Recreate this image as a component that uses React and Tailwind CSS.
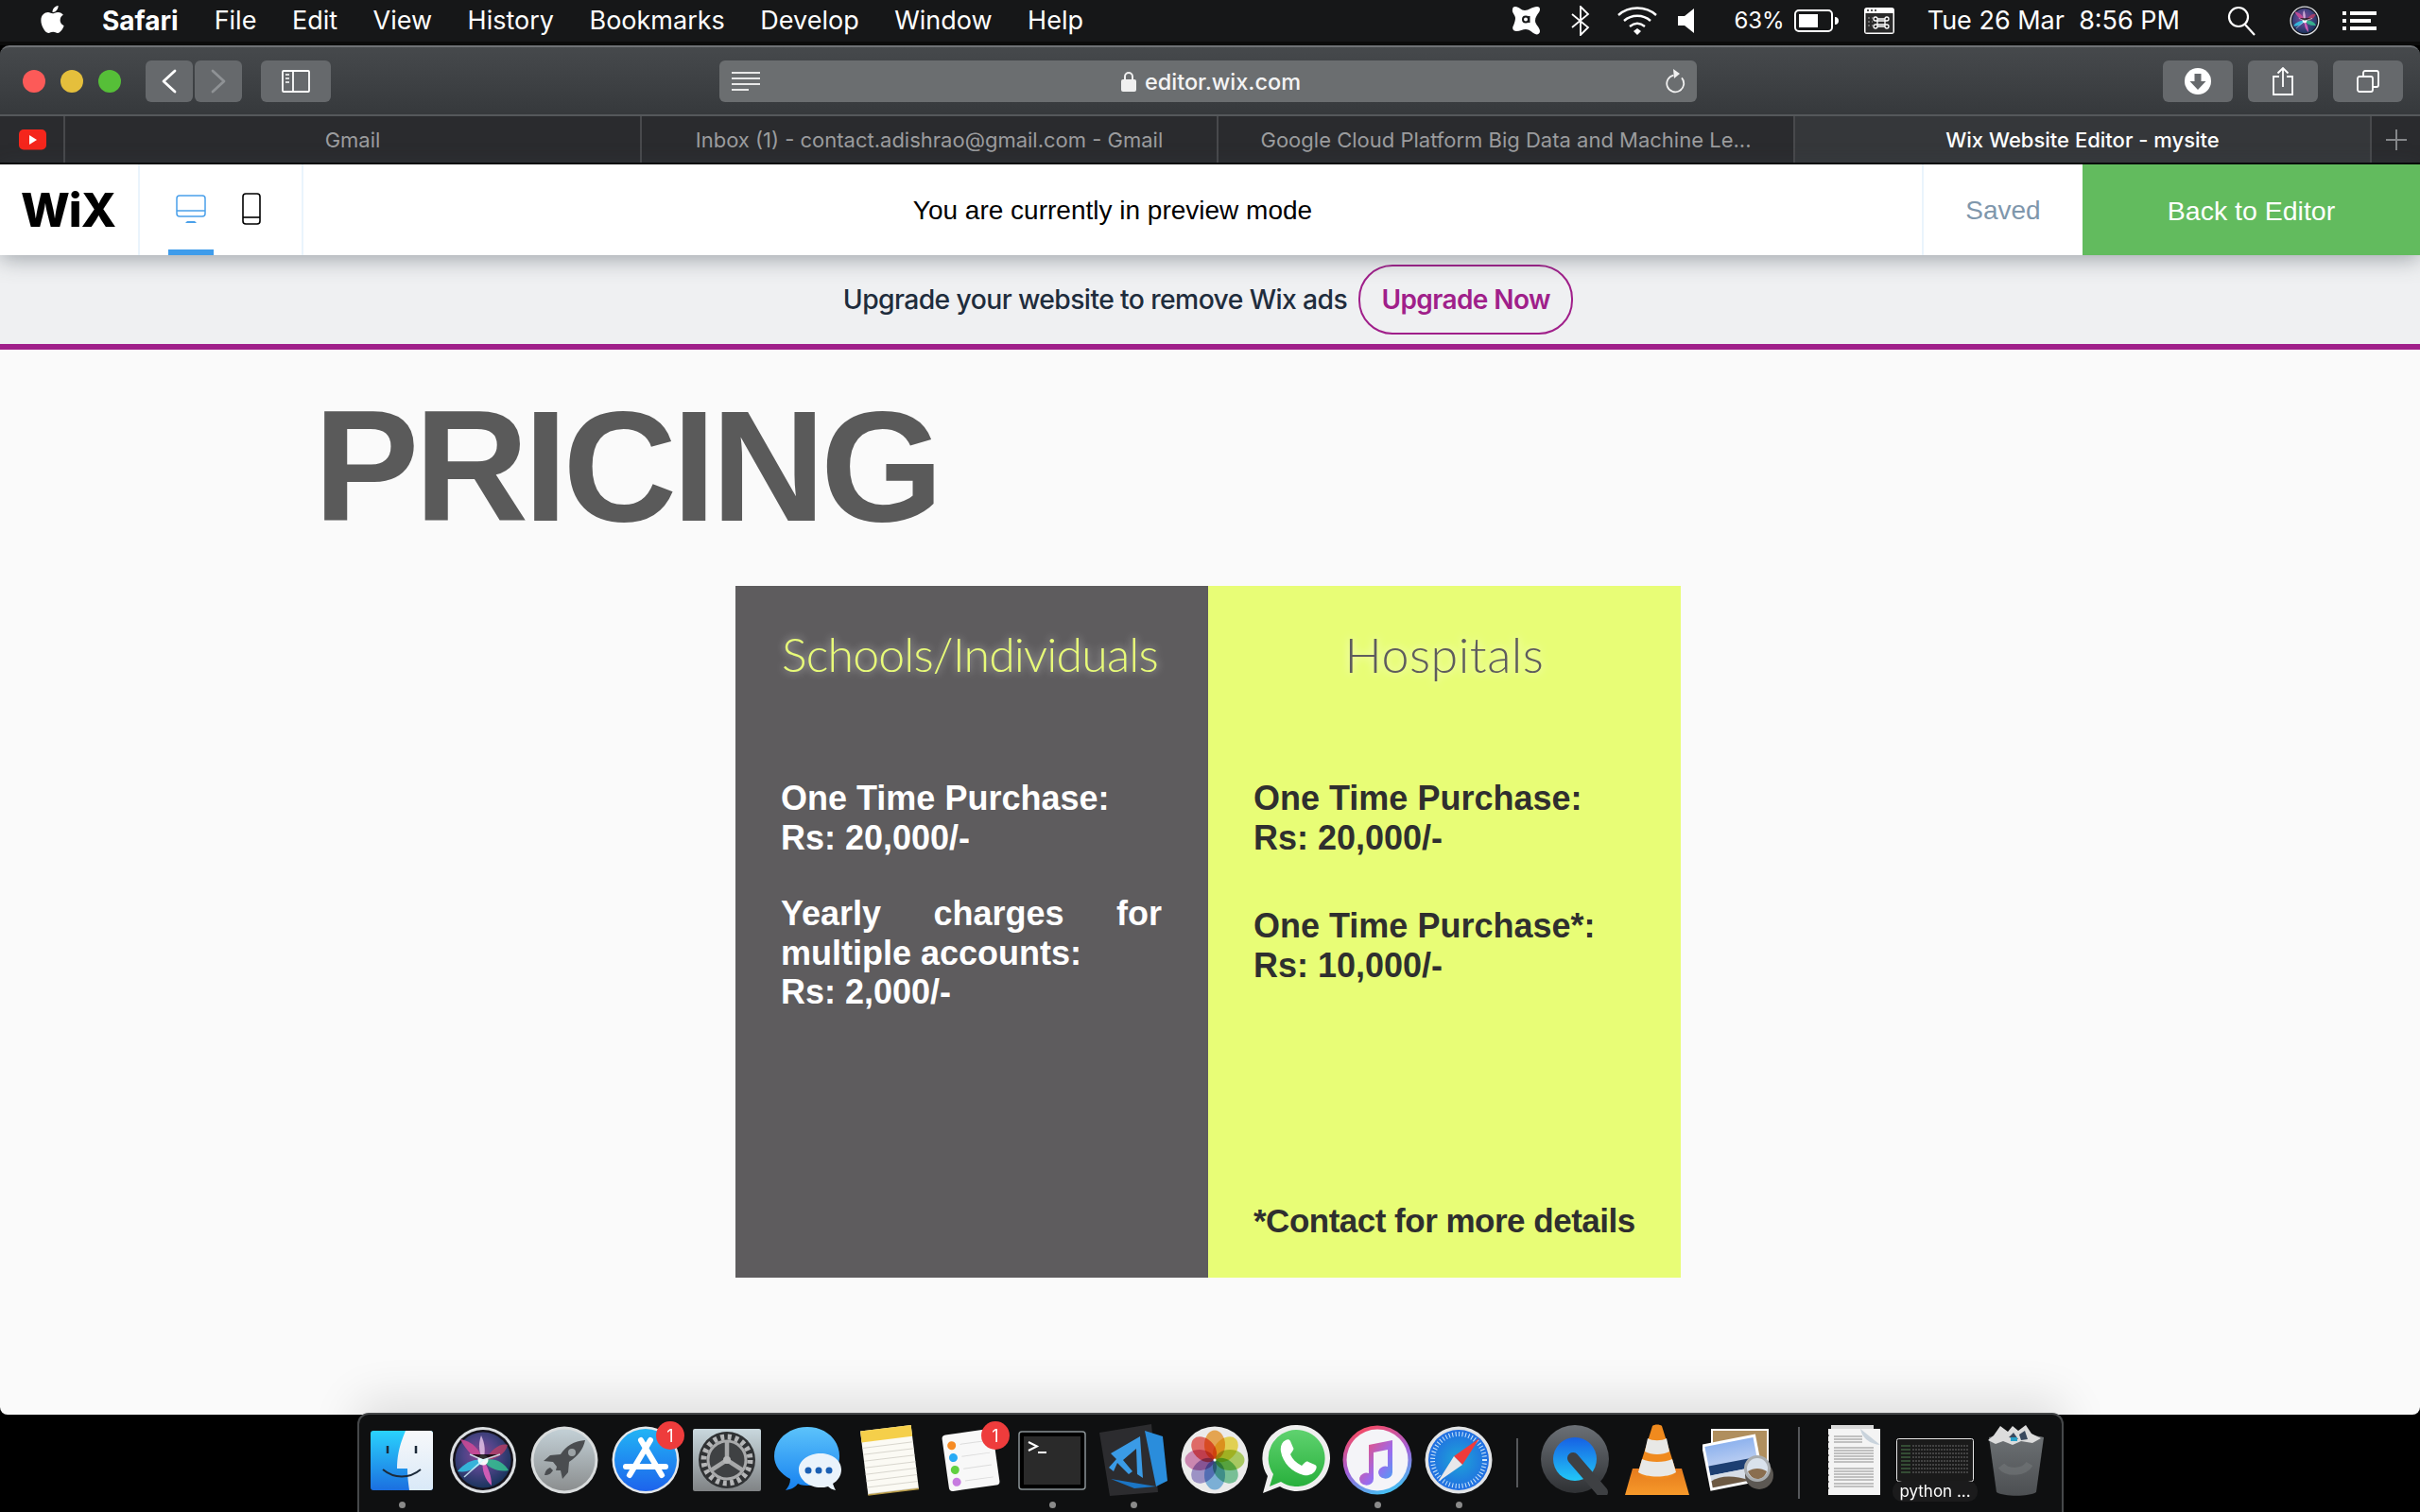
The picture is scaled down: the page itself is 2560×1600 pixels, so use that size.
import React from "react";
import { FaApple } from "react-icons/fa";

const ui = "font-['Inter','Liberation_Sans',sans-serif]";
const helv = "font-['Liberation_Sans',Arial,sans-serif]";

// top bar icons
const Avast = () => (
    <svg width="32" height="32" viewBox="0 0 32 32">
        <path fill="#fff" d="M4 1c4 0 6 4 10 4s8-4 13-4c3 0 4 3 2 6-2 3-4 5-4 9s5 7 5 11c0 3-3 4-5 3-4-2-6-5-10-5-3 0-6 2-10 2-3 0-5-3-3-6 1-3 2-5 2-8S0 7 1 4c0-2 1-3 3-3z" />
        <circle cx="15" cy="14.500" r="3" fill="none" stroke="#161718" strokeWidth="2" />
        <path d="M18.500 11v7" stroke="#161718" strokeWidth="2" />
    </svg>
);

const Bluetooth = () => (
    <svg width="20" height="32" viewBox="0 0 20 32" fill="none" stroke="#fff" strokeWidth="1.800">
        <path d="M1 9l17 14-8 8V1l8 8L1 23" />
    </svg>
);

const Wifi = () => (
    <svg width="42" height="30" viewBox="0 0 42 30" fill="none" stroke="#fff" strokeWidth="2.400">
        <path d="M1 9c11-10 29-10 40 0" />
        <path d="M7 15c8-7 20-7 28 0" />
        <path d="M13 21c5-4 11-4 16 0" />
        <path d="M17 26l4-3 4 3-4 4z" fill="#fff" stroke="none" />
    </svg>
);

const Speaker = () => (
    <svg width="18" height="26" viewBox="0 0 18 26">
        <path fill="#fff" d="M0 8h7l10-8v26L7 18H0z" />
    </svg>
);

const Battery = () => (
    <svg width="48" height="24" viewBox="0 0 48 24">
        <rect x="1" y="1" width="39" height="22" rx="4" fill="none" stroke="#fff" strokeWidth="2" />
        <rect x="5" y="5" width="20" height="14" fill="#fff" />
        <path d="M43 8c3 0 4 2 4 4s-1 4-4 4z" fill="#fff" />
    </svg>
);

const CmdIcon = () => (
    <svg width="32" height="28" viewBox="0 0 32 28">
        <rect width="32" height="28" rx="3" fill="#fff" />
        <rect x="1.500" y="6" width="29" height="20.500" fill="#2a2a2a" />
        <circle cx="4" cy="3" r="1" fill="#222" />
        <circle cx="8" cy="3" r="1" fill="#222" />
        <circle cx="12" cy="3" r="1" fill="#222" />
        <path d="M14 12h8v8h-8zM14 12a2 2 0 1 0-2 2h12a2 2 0 1 0-2-2v8a2 2 0 1 0 2-2H12a2 2 0 1 0 2 2z" fill="none" stroke="#fff" strokeWidth="1.300" />
        <path d="M4 11h2M8 11h1M4 15h2M8 15h1M4 19h2M8 19h1" stroke="#aaa" strokeWidth="1.200" />
    </svg>
);

const SearchIcon = () => (
    <svg width="30" height="32" viewBox="0 0 30 32" fill="none" stroke="#fff" strokeWidth="2.200">
        <circle cx="12" cy="12" r="10" />
        <path d="M19 20l10 11" />
    </svg>
);

const ListIcon = () => (
    <svg width="36" height="20" viewBox="0 0 36 20" fill="#fff">
        <rect x="0" y="0" width="4" height="4" />
        <rect x="8" y="0" width="28" height="4" />
        <rect x="0" y="8" width="4" height="4" />
        <rect x="8" y="8" width="22" height="4" />
        <rect x="0" y="16" width="4" height="4" />
        <rect x="8" y="16" width="28" height="4" />
    </svg>
);

const SiriOrb = ({ size, id }) => (
    <svg width={size} height={size} viewBox="0 0 72 72">
        <defs>
            <radialGradient id={id} cx="45%" cy="40%" r="65%">
                <stop offset="0%" stopColor="#8a4592" />
                <stop offset="45%" stopColor="#4f4488" />
                <stop offset="100%" stopColor="#123257" />
            </radialGradient>
        </defs>
        <circle cx="36" cy="36" r="35" fill="#dcdfe2" />
        <circle cx="36" cy="36" r="32" fill="#15131c" />
        <circle cx="36" cy="36" r="29.500" fill={`url(#${id})`} />
        <path d="M12 14c12 2 20 10 24 22-10-2-18-10-24-22z" fill="#d04a97" opacity=".85" />
        <path d="M38 36c8-12 16-18 24-16-2 10-14 16-24 16z" fill="#c23d63" opacity=".75" />
        <path d="M9 48c8-10 19-14 28-12-6 9-18 14-28 12z" fill="#32c0e2" opacity=".9" />
        <path d="M36 36c12-3 22 2 27 11-11 2-21-2-27-11z" fill="#35c292" opacity=".85" />
        <path d="M36 36c6 8 9 18 9 27-7-6-11-17-9-27z" fill="#df5fbb" opacity=".9" />
        <path d="M34 10c4 8 5 18 2 26-5-8-5-18-2-26z" fill="#e9c8ea" opacity=".8" />
        <circle cx="36" cy="36" r="5.500" fill="#fff" opacity=".95" />
        <path d="M16 54l20-18M22 30l14 6 18-6" stroke="#d8fbff" strokeWidth="1.600" opacity=".8" />
    </svg>
);

// toolbar icons
const Chevron = ({ flip, color }) => (
    <svg width="16" height="26" viewBox="0 0 16 26" fill="none" stroke={color} strokeWidth="2.800" strokeLinecap="round" strokeLinejoin="round" className={flip ? "rotate-180" : ""}>
        <path d="M14 2L2 13l12 11" />
    </svg>
);

const Sidebar = () => (
    <svg width="30" height="24" viewBox="0 0 30 24" fill="none" stroke="#fff" strokeWidth="1.800">
        <rect x="1" y="1" width="28" height="22" rx="1" />
        <path d="M12 1v22" />
        <path d="M4 5h4M4 9h4M4 13h4" strokeWidth="1.600" />
    </svg>
);

const Reader = () => (
    <svg width="30" height="20" viewBox="0 0 30 20" fill="#e8e8e8">
        <rect width="30" height="2" />
        <rect y="6" width="30" height="2" />
        <rect y="12" width="30" height="2" />
        <rect y="18" width="18" height="2" />
    </svg>
);

const Lock = () => (
    <svg width="16" height="22" viewBox="0 0 16 22">
        <path d="M4 10V6a4 4 0 0 1 8 0v4" fill="none" stroke="#f0f0f0" strokeWidth="2" />
        <rect y="9" width="16" height="13" rx="2" fill="#f0f0f0" />
    </svg>
);

const Reload = () => (
    <svg width="22" height="26" viewBox="0 0 22 26" fill="none" stroke="#f0f0f0" strokeWidth="1.800">
        <path d="M15 7a9 9 0 1 1-9 1" transform="rotate(25 11 15)" />
        <path d="M9 0l7 5-6 5z" fill="#f0f0f0" stroke="none" />
    </svg>
);

const Download = () => (
    <svg width="28" height="28" viewBox="0 0 28 28">
        <circle cx="14" cy="14" r="14" fill="#fff" />
        <path d="M10.500 6h7v8h5L14 23 5.500 14h5z" fill="#66696c" />
    </svg>
);

const Share = () => (
    <svg width="22" height="30" viewBox="0 0 22 30" fill="none" stroke="#fff" strokeWidth="1.800">
        <path d="M7 10H1v19h20V10h-6" />
        <path d="M11 21V1M5.500 6.500L11 1l5.500 5.500" />
    </svg>
);

const TabsIcon = () => (
    <svg width="24" height="24" viewBox="0 0 24 24" fill="none" stroke="#fff" strokeWidth="1.800">
        <rect x="1" y="7" width="16" height="16" rx="2" />
        <path d="M7 7V3a2 2 0 0 1 2-2h12a2 2 0 0 1 2 2v13a2 2 0 0 1-2 2h-4" />
    </svg>
);

const Youtube = () => (
    <svg width="30" height="22" viewBox="0 0 30 22">
        <rect width="29" height="21.500" rx="5" fill="#f5261c" />
        <path d="M11 6l8 5-8 5z" fill="#fff" />
    </svg>
);

const Desktop = () => (
    <svg width="32" height="32" viewBox="0 0 32 32" fill="none" stroke="#4aa0ea" strokeWidth="1.500">
        <rect x="1" y="1" width="30" height="22" rx="3" />
        <path d="M1 17h30" />
        <path d="M10 30h12l-2-2h-8z" fill="#4aa0ea" stroke="none" />
    </svg>
);

const Phone = () => (
    <svg width="20" height="34" viewBox="0 0 20 34" fill="none" stroke="#000" strokeWidth="1.600">
        <rect x="1" y="1" width="18" height="32" rx="3" />
        <path d="M1 26h18" />
    </svg>
);

// dock icons
const Finder = () => (
    <svg width="66" height="63" viewBox="0 0 66 63">
        <defs>
            <linearGradient id="fb" x1="0" y1="0" x2="0" y2="1">
                <stop offset="0%" stopColor="#2ad2fd" />
                <stop offset="100%" stopColor="#1b6fe0" />
            </linearGradient>
            <linearGradient id="fw" x1="0" y1="0" x2="0" y2="1">
                <stop offset="0%" stopColor="#f7f8fa" />
                <stop offset="100%" stopColor="#d9e9f8" />
            </linearGradient>
        </defs>
        <rect width="66" height="63" rx="3" fill="url(#fb)" />
        <path d="M37 0h26a3 3 0 0 1 3 3v57a3 3 0 0 1-3 3H41c-1-8-2-14-2-23H28c0-16 4-28 9-40z" fill="url(#fw)" />
        <path d="M18 16v8M48 16v8" stroke="#1c2a3a" strokeWidth="2.500" />
        <path d="M13 41c12 10 28 10 40 0" fill="none" stroke="#1c2a3a" strokeWidth="2" />
    </svg>
);

const Launchpad = () => (
    <svg width="72" height="72" viewBox="0 0 72 72">
        <defs>
            <linearGradient id="lp" x1="0" y1="0" x2="0" y2="1">
                <stop offset="0%" stopColor="#c3d0d6" />
                <stop offset="100%" stopColor="#8b8e8f" />
            </linearGradient>
        </defs>
        <circle cx="36" cy="36" r="35.500" fill="#d9dcdd" />
        <circle cx="36" cy="36" r="32.500" fill="url(#lp)" />
        <path d="M58 15c-12 1-20 6-26 15l-11 1-7 6 10 1 4 5-1 4 5 0 2 9 6-7 1-11c9-6 15-13 17-23z" fill="#4a4d50" />
        <circle cx="44" cy="28" r="4" fill="#9ca3a6" />
        <path d="M21 44c-3 1-5 3-6 8 5 0 7-2 9-5z" fill="#4a4d50" />
    </svg>
);

const AppStore = () => (
    <svg width="72" height="72" viewBox="0 0 72 72">
        <defs>
            <linearGradient id="as" x1="0" y1="0" x2="0" y2="1">
                <stop offset="0%" stopColor="#22b4f5" />
                <stop offset="100%" stopColor="#1d63ec" />
            </linearGradient>
        </defs>
        <circle cx="36" cy="36" r="35.500" fill="#e4e7ea" />
        <circle cx="36" cy="36" r="33" fill="url(#as)" />
        <g stroke="#fff" strokeWidth="6" strokeLinecap="round" fill="none">
            <path d="M31 15l22 37" />
            <path d="M41 15L19 52" />
            <path d="M15 43h42" />
        </g>
    </svg>
);

const SysPrefs = () => (
    <svg width="72" height="66" viewBox="0 0 72 66">
        <defs>
            <linearGradient id="sp" x1="0" y1="0" x2="0" y2="1">
                <stop offset="0%" stopColor="#c9d8de" />
                <stop offset="100%" stopColor="#808385" />
            </linearGradient>
        </defs>
        <rect width="72" height="66" rx="2" fill="url(#sp)" />
        <circle cx="36" cy="33" r="30" fill="#303234" />
        <circle cx="36" cy="33" r="24.500" fill="none" stroke="#b5b6b7" strokeWidth="6" strokeDasharray="4 3.700" />
        <circle cx="36" cy="33" r="20" fill="#3f4143" stroke="#a9aaab" strokeWidth="3" />
        <g stroke="#a7a8a9" strokeWidth="4.500">
            <path d="M36 33V13" />
            <path d="M36 33l17 11" />
            <path d="M36 33L19 44" />
        </g>
        <circle cx="36" cy="33" r="4" fill="#b5b6b7" />
    </svg>
);

const Messages = () => (
    <svg width="72" height="72" viewBox="0 0 72 72">
        <defs>
            <linearGradient id="mg" x1="0" y1="0" x2="0" y2="1">
                <stop offset="0%" stopColor="#5cc3fb" />
                <stop offset="100%" stopColor="#1681f0" />
            </linearGradient>
        </defs>
        <path d="M35 1c19 0 34 13 34 31 0 16-13 30-30 31-6 0-10 0-14-2-3 4-7 6-13 7 3-4 5-7 5-12C7 51 0 42 0 32 0 14 16 1 35 1z" fill="url(#mg)" />
        <path d="M49 29c12 0 22 7 22 17 0 7-4 12-9 15 1 3 2 5 3 7-4-1-6-2-8-4-3 1-5 1-8 1-12 0-23-8-23-19 0-10 11-17 23-17z" fill="#eaf3fb" />
        <circle cx="36" cy="47" r="3.500" fill="#1a5fb4" />
        <circle cx="47" cy="47" r="3.500" fill="#1a5fb4" />
        <circle cx="58" cy="47" r="3.500" fill="#1a5fb4" />
    </svg>
);

const Notes = () => {
    const lines = [22, 29, 36, 43, 50, 57, 64, 71];
    return (
        <svg width="68" height="76" viewBox="0 0 68 76">
            <g transform="rotate(-7 34 38)">
                <rect x="7" y="4" width="54" height="68" fill="#fbfaf4" />
                <rect x="7" y="4" width="54" height="12" fill="#f5cf4a" />
                {lines.map((y) => (
                    <path key={y} d={`M7 ${y}h54`} stroke="#d8d6ce" strokeWidth="1" />
                ))}
                <path d="M7 72h54" stroke="#b79a45" strokeWidth="1.500" />
            </g>
        </svg>
    );
};

const Reminders = () => (
    <svg width="62" height="72" viewBox="0 0 62 72">
        <g transform="rotate(-8 31 36)">
            <rect x="4" y="6" width="54" height="60" rx="4" fill="#f8f8f8" />
            <circle cx="13" cy="18" r="4.500" fill="#f68b24" />
            <circle cx="13" cy="31" r="4.500" fill="#27aaf5" />
            <circle cx="13" cy="44" r="4.500" fill="#61d040" />
            <circle cx="13" cy="57" r="4.500" fill="#c77be0" />
            <g stroke="#dcdcdc" strokeWidth="1">
                <path d="M22 18h30M22 31h30M22 44h30M22 57h30" />
            </g>
        </g>
    </svg>
);

const TerminalApp = () => (
    <svg width="72" height="63" viewBox="0 0 72 63">
        <rect x="1" y="1" width="70" height="61" rx="3" fill="#000" stroke="#8b9396" strokeWidth="1.500" />
        <rect x="6" y="6" width="60" height="51" fill="#2a2a2a" />
        <path d="M11 12l9 4.500-9 4.500" fill="none" stroke="#fff" strokeWidth="2" />
        <path d="M21 23h9" stroke="#fff" strokeWidth="2" />
    </svg>
);

const VsCode = () => (
    <svg width="72" height="76" viewBox="0 0 72 76">
        <path d="M0 9l55-9 7 72-51 4z" fill="#2c2c2f" />
        <path d="M48 7l19 6 5 47-12 6z" fill="#2a8ddc" />
        <path d="M12 58l48 8-23 2z" fill="#1b75c4" />
        <path d="M12 31l31-18 3 44-6-4-1-27-14 12 10 12-4 3-12-12-4 9-5-4 8-9z" fill="#3a9be6" />
    </svg>
);

const Photos = () => {
    const petals = [
        ["#f7a53a", 0],
        ["#f4dd3c", 45],
        ["#a9d34f", 90],
        ["#6cc793", 135],
        ["#71b3e3", 180],
        ["#9a8fcf", 225],
        ["#d77fb4", 270],
        ["#ef5c57", 315],
    ];
    return (
        <svg width="72" height="72" viewBox="0 0 72 72">
            <circle cx="36" cy="36" r="35.500" fill="#ebebeb" />
            {petals.map(([c, a]) => (
                <ellipse key={a} cx="36" cy="20" rx="11" ry="15.500" fill={c} opacity=".85" transform={`rotate(${a} 36 36)`} style={{ mixBlendMode: "multiply" }} />
            ))}
            <circle cx="36" cy="36" r="1.500" fill="#fff" />
        </svg>
    );
};

const WhatsApp = () => (
    <svg width="72" height="76" viewBox="0 0 72 76">
        <defs>
            <linearGradient id="wa" x1="0" y1="0" x2="0" y2="1">
                <stop offset="0%" stopColor="#5fd26f" />
                <stop offset="100%" stopColor="#28b03c" />
            </linearGradient>
        </defs>
        <path d="M36 1a35 35 0 1 1-17 65L1 73l5-18A35 35 0 0 1 36 1z" fill="#efefef" />
        <path d="M36 6a30 30 0 1 1-16 55L8 66l4-13A30 30 0 0 1 36 6z" fill="url(#wa)" />
        <path d="M25 17c2-1 4-1 5 1l3 7c1 1 0 3-1 4l-2 3c2 5 6 9 12 12l3-3c1-1 3-2 4-1l7 3c2 1 2 3 1 5-2 5-8 7-13 6-12-3-22-13-24-25-1-5 1-10 5-12z" fill="#fff" />
    </svg>
);

const Music = () => (
    <svg width="74" height="74" viewBox="0 0 74 74">
        <defs>
            <linearGradient id="mr" x1="0.300" y1="0" x2="0.700" y2="1">
                <stop offset="0%" stopColor="#f9495f" />
                <stop offset="50%" stopColor="#a35fd8" />
                <stop offset="100%" stopColor="#3cc8f5" />
            </linearGradient>
            <linearGradient id="mn" x1="0" y1="0" x2="1" y2="1">
                <stop offset="0%" stopColor="#fb4a66" />
                <stop offset="60%" stopColor="#9a6bee" />
                <stop offset="100%" stopColor="#3fa9f5" />
            </linearGradient>
        </defs>
        <circle cx="37" cy="37" r="36.500" fill="url(#mr)" />
        <circle cx="37" cy="37" r="32.500" fill="#f4f4f8" />
        <path d="M28 21l25-5v34a7.500 6.500 0 1 1-5-6V26l-15 3v28a7.500 6.500 0 1 1-5-6z" fill="url(#mn)" />
    </svg>
);

const Safari = () => (
    <svg width="72" height="72" viewBox="0 0 72 72">
        <defs>
            <radialGradient id="sf" cx="50%" cy="50%" r="55%">
                <stop offset="0%" stopColor="#1ea5d8" />
                <stop offset="100%" stopColor="#2168e2" />
            </radialGradient>
        </defs>
        <circle cx="36" cy="36" r="35.500" fill="#e2e4e6" />
        <circle cx="36" cy="36" r="32" fill="url(#sf)" />
        <circle cx="36" cy="36" r="27.500" fill="none" stroke="#cfe6fa" strokeWidth="5" strokeDasharray="1 2.500" />
        <path d="M58 13L40 41 31 32z" fill="#ef3b3b" />
        <path d="M14 59l17-27 9 9z" fill="#e8e8ea" />
    </svg>
);

const QuickTime = () => (
    <svg width="74" height="74" viewBox="0 0 74 74">
        <defs>
            <linearGradient id="qr" x1="0" y1="0" x2="0" y2="1">
                <stop offset="0%" stopColor="#6b7076" />
                <stop offset="100%" stopColor="#2f3134" />
            </linearGradient>
            <linearGradient id="qb" x1="0" y1="0" x2="0" y2="1">
                <stop offset="0%" stopColor="#1660e4" />
                <stop offset="100%" stopColor="#22c8f7" />
            </linearGradient>
        </defs>
        <circle cx="36" cy="36" r="36" fill="url(#qr)" />
        <circle cx="36" cy="36" r="23" fill="url(#qb)" />
        <path d="M34 35l31 36" stroke="#3e4043" strokeWidth="12" strokeLinecap="round" />
    </svg>
);

const Vlc = () => (
    <svg width="68" height="76" viewBox="0 0 68 76">
        <defs>
            <linearGradient id="vb" x1="0" y1="0" x2="0" y2="1">
                <stop offset="0%" stopColor="#e57a1d" />
                <stop offset="100%" stopColor="#f79a2a" />
            </linearGradient>
        </defs>
        <path d="M8 47h52l8 28H0z" fill="url(#vb)" />
        <path d="M29 2c2-2 8-2 10 0l15 48c-5 12-35 12-40 0z" fill="#f08a1e" />
        <path d="M24 15c5 3 15 3 20 0l3 14c-7 4-19 4-26 0z" fill="#e8e8e6" />
        <path d="M18 37c8 4 24 4 32 0l4 14c-9 6-31 6-40 0z" fill="#e8e8e6" />
    </svg>
);

const Preview = () => (
    <svg width="76" height="68" viewBox="0 0 76 68">
        <defs>
            <linearGradient id="ps" x1="0" y1="0" x2="0" y2="1">
                <stop offset="0%" stopColor="#8fb3ee" />
                <stop offset="100%" stopColor="#e0e5f5" />
            </linearGradient>
        </defs>
        <rect x="9" y="1" width="61" height="54" fill="#fff" />
        <rect x="11" y="3" width="57" height="50" fill="#b08f5e" />
        <g transform="rotate(-11 30 36)">
            <rect x="3" y="12" width="58" height="50" fill="#fff" />
            <rect x="6" y="15" width="52" height="44" fill="url(#ps)" />
            <path d="M6 36h52v10H6z" fill="#1d3f72" />
            <path d="M6 46h52v13H6z" fill="#d6dde6" />
            <path d="M6 52c10-4 24-2 40 7H6z" fill="#6d5a44" />
        </g>
        <circle cx="60" cy="50" r="15" fill="#5c5853" />
        <circle cx="58" cy="43" r="14" fill="#a9adb0" />
        <circle cx="58" cy="43" r="11" fill="#d9e2ec" />
        <path d="M48 46c6-4 14-4 20 0-2 6-6 8-10 8s-8-3-10-8z" fill="#8a6e4f" />
    </svg>
);

const DocThumb = () => {
    const lines = [12, 15, 18, 24, 27, 30, 33, 36, 39, 46, 49, 52, 55, 58, 62, 65];
    return (
        <svg width="58" height="74" viewBox="0 0 58 74">
            <rect x="5" y="0" width="45" height="8" fill="#d9d9d9" />
            <rect x="2" y="4" width="55" height="70" fill="#f4f4f4" />
            <path d="M36 4c2 10 10 16 21 17L36 4z" fill="#c9d3dc" />
            {lines.map((y) => (
                <path key={y} d={`M8 ${y}h${y < 20 ? 30 : 42}`} stroke="#8d8d8d" strokeWidth="1" />
            ))}
            <path d="M1 10v60" stroke="#111" strokeWidth="3" strokeDasharray="2 5" />
        </svg>
    );
};

const TermThumb = () => {
    const rows = [8, 12, 16, 20, 24, 28, 32, 36];
    return (
        <svg width="82" height="46" viewBox="0 0 82 46">
            <rect x="0.500" y="0.500" width="81" height="45" rx="2" fill="#1a1a1a" stroke="#e5e5e5" />
            {rows.map((y) => (
                <g key={y}>
                    <path d={`M5 ${y}h10`} stroke="#4f7f4f" strokeWidth="1" />
                    <path d={`M17 ${y}h60`} stroke="#6a6a6a" strokeWidth="1" strokeDasharray="2 1" />
                </g>
            ))}
        </svg>
    );
};

const Trash = () => (
    <svg width="60" height="76" viewBox="0 0 60 76">
        <defs>
            <linearGradient id="tb" x1="0" y1="0" x2="0" y2="1">
                <stop offset="0%" stopColor="#6d7174" />
                <stop offset="100%" stopColor="#4c4f52" />
            </linearGradient>
        </defs>
        <path d="M1 14c15-4 43-4 58 0l-8 58c-8 5-34 5-42 0z" fill="url(#tb)" />
        <path d="M6 12l7-10 8 6 5-6 6 5 8-6 6 9 10 5-9 5-12-2-9 4-10-4-8 3-8-4z" fill="#dcdcdc" />
        <path d="M22 14l5-5 5 7zM33 11l6-4 3 9-7 1z" fill="#39495e" />
        <path d="M24 14h7v4h-7z" fill="#28a0c8" />
        <path d="M14 44c6 8 24 8 30-2" stroke="#787b7e" strokeWidth="8" fill="none" opacity=".5" />
    </svg>
);

const Badge = ({ className }) => (
    <span className={`absolute flex h-[30px] w-[30px] items-center justify-center rounded-full bg-[#ee3c3c] text-[18px] text-white ${ui} ${className}`}>1</span>
);

const DockSlot = ({ children, dot, badge }) => (
    <div className="flex w-[86px] shrink-0 flex-col items-center">
        <div className="relative flex h-[80px] w-full items-center justify-center">
            {children}
            {badge && <Badge className="right-[2px] -top-[1px]" />}
        </div>
        {dot && <span className="mt-[4px] h-[7px] w-[7px] rounded-full bg-[#8a8a8a]" />}
    </div>
);

const menus = ["File", "Edit", "View", "History", "Bookmarks", "Develop", "Window", "Help"];

const Tab = ({ children, active }) => (
    <div className={`flex h-full w-[610px] shrink-0 items-center justify-center border-r-2 border-[#48494c] pt-[2px] text-[22px] ${active ? "bg-[#35373a] font-medium text-white" : "bg-[#2a2b2e] text-[#9b9c9e]"}`}>
        <span>{children}</span>
    </div>
);

const ToolBtn = ({ children, className }) => (
    <div className={`flex h-[44px] items-center justify-center rounded-[6px] bg-[#66696c] ${className}`}>{children}</div>
);

const App = () => {
    return (
        <div className={`flex h-[1600px] w-[2560px] flex-col overflow-hidden bg-black ${ui}`}>
            {/* menu bar */}
            <div className="flex h-[44px] shrink-0 items-center bg-[#161718] pl-[39px] pr-[46px] text-[27px] text-white">
                <FaApple className="mb-[4px] text-[33px]" />
                <span className="ml-[36px] text-[28px] font-bold">Safari</span>
                <div className="ml-[38px] flex gap-[37.500px]">
                    {menus.map((m) => (
                        <span key={m}>{m}</span>
                    ))}
                </div>
                <div className="ml-auto flex items-center">
                    <Avast />
                    <span className="ml-[31px]"><Bluetooth /></span>
                    <span className="ml-[29px]"><Wifi /></span>
                    <span className="ml-[22px]"><Speaker /></span>
                    <span className="ml-[41px] text-[24px]">63%</span>
                    <span className="ml-[10px]"><Battery /></span>
                    <span className="ml-[26px]"><CmdIcon /></span>
                    <span className="ml-[35px] whitespace-pre">Tue 26 Mar  8:56 PM</span>
                    <span className="ml-[50px]"><SearchIcon /></span>
                    <span className="ml-[36px]"><SiriOrb size={32} id="siri-small" /></span>
                    <span className="ml-[24px]"><ListIcon /></span>
                </div>
            </div>

            <div className="h-[4px] shrink-0 bg-[#0b0b0b]" />

            {/* safari toolbar */}
            <div className="flex h-[75px] shrink-0 items-center rounded-t-[10px] border-t-2 border-b-2 border-t-[#6f7276] border-b-[#55585b] bg-gradient-to-b from-[#46494c] to-[#36393c] pl-[24px] pr-[18px]">
                <div className="flex gap-[16px]">
                    <span className="h-[24px] w-[24px] rounded-full bg-[#fc5a58]" />
                    <span className="h-[24px] w-[24px] rounded-full bg-[#e5bf3c]" />
                    <span className="h-[24px] w-[24px] rounded-full bg-[#56bf38]" />
                </div>
                <ToolBtn className="ml-[26px] w-[50px]"><Chevron color="#fff" /></ToolBtn>
                <ToolBtn className="ml-[2px] w-[50px]"><Chevron flip color="#8f9295" /></ToolBtn>
                <ToolBtn className="ml-[20px] w-[74px]"><Sidebar /></ToolBtn>
                <div className="relative ml-[411px] flex h-[44px] w-[1034px] items-center justify-center rounded-[6px] bg-[#6b6e70] pl-[6px] text-[23.500px] font-medium text-[#f4f4f4]">
                    <span className="absolute left-[13px]"><Reader /></span>
                    <Lock />
                    <span className="ml-[9px] pt-[2px]">editor.wix.com</span>
                    <span className="absolute right-[12px]"><Reload /></span>
                </div>
                <ToolBtn className="ml-auto w-[74px]"><Download /></ToolBtn>
                <ToolBtn className="ml-[16px] w-[74px]"><Share /></ToolBtn>
                <ToolBtn className="ml-[16px] w-[74px]"><TabsIcon /></ToolBtn>
            </div>

            {/* tabs */}
            <div className="flex h-[49px] shrink-0 items-center bg-[#2a2b2e]">
                <div className="flex h-full w-[69px] shrink-0 items-center justify-start border-r-2 border-[#48494c] pl-[20px]">
                    <Youtube />
                </div>
                <Tab>Gmail</Tab>
                <Tab>Inbox (1) - contact.adishrao@gmail.com - Gmail</Tab>
                <Tab>Google Cloud Platform Big Data and Machine Le...</Tab>
                <Tab active>Wix Website Editor - mysite</Tab>
                <div className="flex flex-1 items-center justify-center">
                    <svg width="24" height="24" viewBox="0 0 24 24" stroke="#85878a" strokeWidth="2">
                        <path d="M12 1v22M1 12h22" />
                    </svg>
                </div>
            </div>
            <div className="h-[2px] shrink-0 bg-black" />

            {/* wix preview bar */}
            <div className="relative z-10 flex h-[96px] shrink-0 items-stretch bg-white shadow-[0_4px_22px_rgba(60,70,80,0.45)]">
                <div className="flex w-[148px] shrink-0 items-center border-r-2 border-[#eaf4fc] pl-[22px]">
                    <span className="text-[49px] font-extrabold leading-none tracking-[-1px] text-black">WiX</span>
                </div>
                <div className="flex w-[173px] shrink-0 border-r-2 border-[#eaf4fc]">
                    <div className="ml-[30px] flex w-[48px] flex-col items-center">
                        <div className="mt-[32px]"><Desktop /></div>
                        <div className="mt-auto h-[6px] w-[48px] bg-[#3f9ceb]" />
                    </div>
                    <div className="ml-[30px] mt-[30px]"><Phone /></div>
                </div>
                <div className={`flex flex-1 items-center justify-center pt-[2px] text-[28px] text-black ${helv}`}>
                    You are currently in preview mode
                </div>
                <div className={`flex w-[170px] shrink-0 items-center justify-center border-l-2 border-[#eaf4fc] pt-[2px] text-[28px] text-[#7f97ac] ${helv}`}>
                    Saved
                </div>
                <div className={`flex w-[357px] shrink-0 items-center justify-center bg-[#62bb5e] pt-[2px] text-[28.500px] text-white ${helv}`}>
                    Back to Editor
                </div>
            </div>

            {/* upgrade banner */}
            <div className="flex h-[94px] shrink-0 items-center justify-center bg-[#eff0f2] pr-[4px]">
                <span className={`text-[28.300px] font-medium text-[#1f2d3d] ${ui} tracking-[-0.6px]`}>Upgrade your website to remove Wix ads</span>
                <div className="ml-[12px] flex h-[74px] w-[227px] items-center justify-center rounded-[36px] border-2 border-[#a01f8a] text-[28px] font-semibold tracking-[-0.6px] text-[#a01f8a]">
                    Upgrade Now
                </div>
            </div>
            <div className="h-[6px] shrink-0 bg-[#a01f8a]" />

            {/* page */}
            <div className={`flex min-h-0 flex-1 flex-col rounded-b-[8px] bg-[#fafafa] pl-[332px] ${helv}`}>
                <h1 className="mt-[38px] text-[167px] font-bold leading-[170px] tracking-[-5px] text-[#5a5a5a]">PRICING</h1>
                <div className="ml-[446px] mt-[42px] flex h-[732px] w-[1000px]">
                    <div className="flex w-[500px] flex-col bg-[#5e5c5e] pl-[48px] text-white">
                        <div className="mt-[37px] h-[123px] w-[400px] text-center font-['Lato',sans-serif] text-[50px] font-light leading-[70px] tracking-[-0.85px] text-[#e8fb78] [text-shadow:0_0_10px_rgba(255,255,255,0.65)]">
                            Schools/Individuals
                        </div>
                        <div className="mt-[44px] w-[403px] text-[36px] font-bold leading-[41.500px]">
                            <p>One Time Purchase:<br />Rs: 20,000/-</p>
                            <p className="mt-[39px] text-justify">Yearly charges for multiple accounts:<br />Rs: 2,000/-</p>
                        </div>
                    </div>
                    <div className="flex w-[500px] flex-col bg-[#e8fd76] pl-[48px] text-[#2f2f2f]">
                        <div className="mt-[37px] h-[123px] w-[404px] text-center font-['Lato',sans-serif] text-[52px] font-light leading-[70px] tracking-[0.5px] text-[#5e5c5e] [text-shadow:0_0_10px_rgba(255,255,255,0.75)]">
                            Hospitals
                        </div>
                        <div className="mt-[44px] text-[36px] font-bold leading-[41.500px]">
                            <p>One Time Purchase:<br />Rs: 20,000/-</p>
                            <p className="mt-[52px]">One Time Purchase*:<br />Rs: 10,000/-</p>
                        </div>
                        <p className="mb-[40px] mt-auto text-[35px] font-bold leading-[41.500px] tracking-[-0.5px]">*Contact for more details</p>
                    </div>
                </div>
            </div>

            {/* dock */}
            <div className="relative z-10 ml-[378px] -mt-[2px] flex h-[105px] w-[1805px] shrink-0 items-start rounded-t-[12px] border-t-2 border-l-2 border-r-2 border-[#46484a] bg-[#0f1011] pl-[2px] pt-[8px] shadow-[0_-12px_50px_rgba(0,0,0,0.12)]">
                <DockSlot dot><Finder /></DockSlot>
                <DockSlot><SiriOrb size={72} id="siri-dock" /></DockSlot>
                <DockSlot><Launchpad /></DockSlot>
                <DockSlot badge><AppStore /></DockSlot>
                <DockSlot><SysPrefs /></DockSlot>
                <DockSlot><Messages /></DockSlot>
                <DockSlot><Notes /></DockSlot>
                <DockSlot badge><Reminders /></DockSlot>
                <DockSlot dot><TerminalApp /></DockSlot>
                <DockSlot dot><VsCode /></DockSlot>
                <DockSlot><Photos /></DockSlot>
                <DockSlot><WhatsApp /></DockSlot>
                <DockSlot dot><Music /></DockSlot>
                <DockSlot dot><Safari /></DockSlot>
                <div className="flex h-[80px] w-[38px] shrink-0 items-center justify-center">
                    <span className="mt-[6px] h-[52px] w-[2px] bg-[#55575a]" />
                </div>
                <DockSlot><QuickTime /></DockSlot>
                <DockSlot><Vlc /></DockSlot>
                <DockSlot><Preview /></DockSlot>
                <div className="flex h-[80px] w-[36px] shrink-0 items-center justify-end pr-[14px]">
                    <span className="mt-[6px] h-[76px] w-[2px] bg-[#55575a]" />
                </div>
                <DockSlot><DocThumb /></DockSlot>
                <div className="flex w-[86px] shrink-0 flex-col items-center pt-[17px]">
                    <TermThumb />
                    <span className="-mt-[1px] whitespace-nowrap rounded-[10px] bg-[#1b1b1c] px-[7px] text-[17px] leading-[22px] text-white">python ...</span>
                </div>
                <DockSlot><Trash /></DockSlot>
            </div>
        </div>
    );
};

export default App;
